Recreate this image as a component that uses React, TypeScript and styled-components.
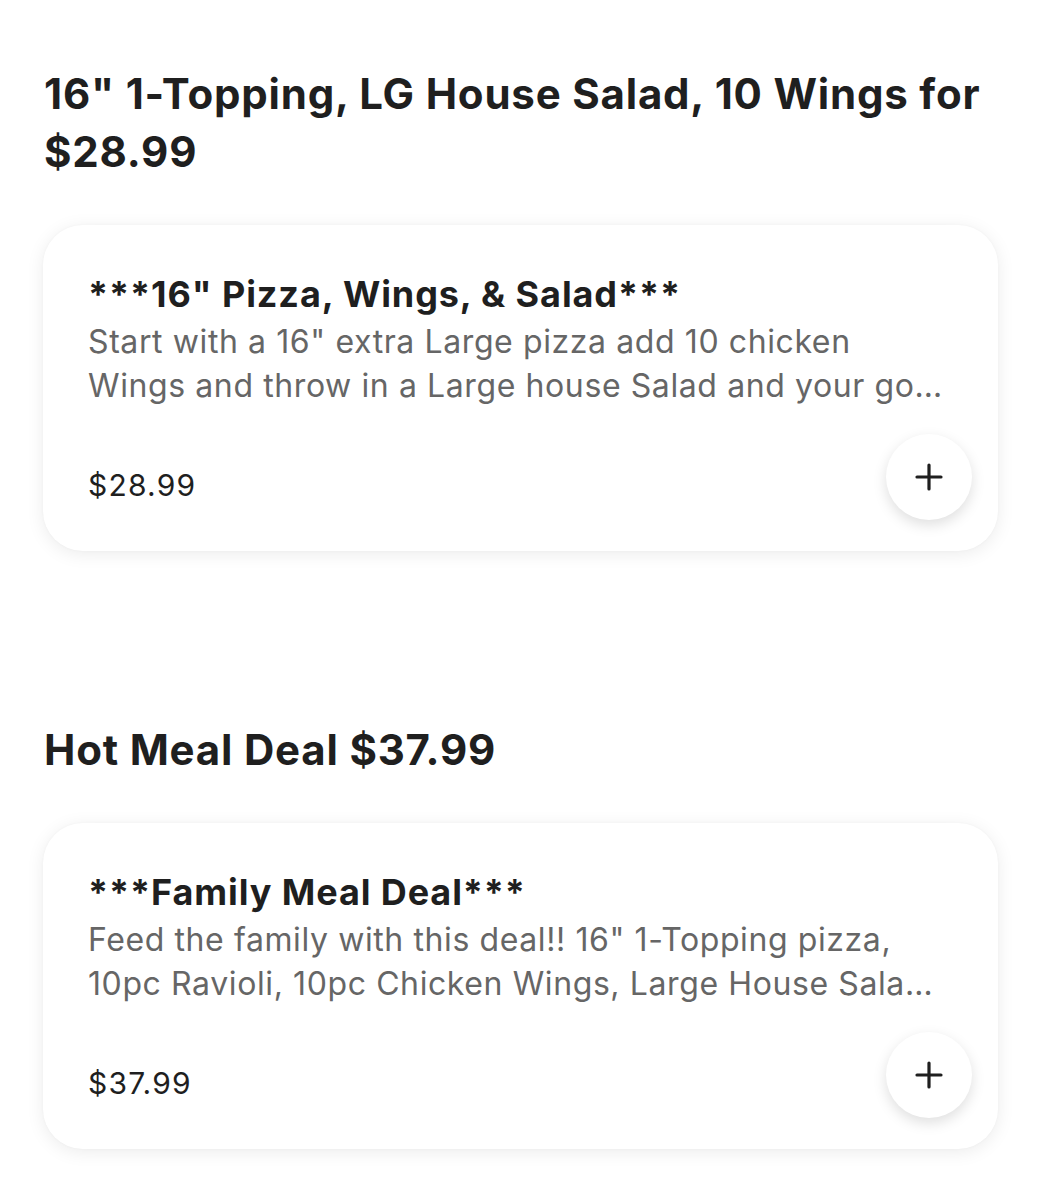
import React from 'react'
import styled, { createGlobalStyle } from 'styled-components'

const GlobalStyle = createGlobalStyle`
  body {
    margin: 0;
    background: #ffffff;
    font-family: 'Inter', 'Liberation Sans', sans-serif;
    color: #191919;
  }
`

const Page = styled.div`
  padding: 65px 44px 40px 43px;
  display: flex;
  flex-direction: column;
`

const Section = styled.section`
  display: flex;
  flex-direction: column;
  margin-bottom: 170px;

  &:last-child {
    margin-bottom: 0;
  }
`

const SectionTitle = styled.h2`
  margin: 0 0 44px 1px;
  font-size: 42px;
  line-height: 58px;
  font-weight: 700;
  color: #1f1f1f;
  letter-spacing: 0.8px;
`

const Card = styled.div`
  background: #ffffff;
  border-radius: 40px;
  box-shadow: 0 3px 18px rgba(0, 0, 0, 0.08), 0 0 3px rgba(0, 0, 0, 0.03);
  padding: 47px 26px 31px 45px;
  display: flex;
  flex-direction: column;
`

const ItemName = styled.h3`
  margin: 0;
  font-size: 36px;
  line-height: 44px;
  font-weight: 700;
  color: #1f1f1f;
  letter-spacing: 0.9px;
`

// clamped to two lines, like the app
const ItemDescription = styled.p`
  margin: 4px 0 0;
  font-size: 32px;
  line-height: 44px;
  color: #666666;
  letter-spacing: 0.6px;
  display: -webkit-box;
  -webkit-line-clamp: 2;
  -webkit-box-orient: vertical;
  overflow: hidden;
  padding-right: 27px;
`

const Footer = styled.div`
  display: flex;
  align-items: center;
  justify-content: space-between;
  margin-top: 26px;
`

const Price = styled.span`
  font-size: 30px;
  line-height: 40px;
  color: #1f1f1f;
  letter-spacing: 1.2px;
  padding-top: 16px;
`

const AddButton = styled.button`
  width: 86px;
  height: 86px;
  border-radius: 50%;
  border: none;
  background: #ffffff;
  box-shadow: 0 5px 14px rgba(0, 0, 0, 0.13);
  display: flex;
  align-items: center;
  justify-content: center;
  padding: 0;
  cursor: pointer;
`

const PlusIcon = () => (
  <svg width="28" height="28" viewBox="0 0 28 28" fill="none">
    <path d="M14 2v24M2 14h24" stroke="#1f1f1f" strokeWidth="3.2" strokeLinecap="round" />
  </svg>
)

interface Deal {
  title: string
  name: string
  description: string
  price: string
}

const deals: Deal[] = [
  {
    title: '16" 1-Topping, LG House Salad, 10 Wings for $28.99',
    name: '***16" Pizza, Wings, & Salad***',
    description:
      'Start with a 16" extra Large pizza add 10 chicken Wings and throw in a Large house Salad and your go-to dinner is ready!',
    price: '$28.99',
  },
  {
    title: 'Hot Meal Deal $37.99',
    name: '***Family Meal Deal***',
    description:
      'Feed the family with this deal!! 16" 1-Topping pizza, 10pc Ravioli, 10pc Chicken Wings, Large House Salad and 2 Liter Soda',
    price: '$37.99',
  },
]

const App: React.FC = () => (
  <>
    <GlobalStyle />
    <Page>
      {deals.map((deal) => (
        <Section key={deal.name}>
          <SectionTitle>{deal.title}</SectionTitle>
          <Card>
            <ItemName>{deal.name}</ItemName>
            <ItemDescription>{deal.description}</ItemDescription>
            <Footer>
              <Price>{deal.price}</Price>
              <AddButton aria-label="Add item">
                <PlusIcon />
              </AddButton>
            </Footer>
          </Card>
        </Section>
      ))}
    </Page>
  </>
)

export default App
